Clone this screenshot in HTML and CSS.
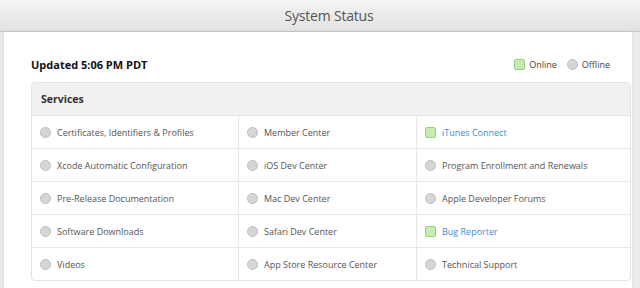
FILE: index.html
```html
<!doctype html>
<html>
<head>
  <link rel="stylesheet" href="styles.css">
</head>
<body>
  <div class="topbar"><span class="title">System Status</span></div>
  <div class="panel">
    <div class="status-head">
      <div class="updated">Updated 5:06 PM PDT</div>
      <div class="legend">
        <span class="ind online"></span><span class="legend-label">Online</span>
        <span class="ind offline"></span><span class="legend-label">Offline</span>
      </div>
    </div>
    <div class="services">
      <div class="services-head">Services</div>
      <div class="grid">
        <div class="cell"><span class="ind offline"></span>Certificates, Identifiers &amp; Profiles</div>
        <div class="cell"><span class="ind offline"></span>Member Center</div>
        <div class="cell"><span class="ind online"></span><a href="#">iTunes Connect</a></div>
        <div class="cell"><span class="ind offline"></span>Xcode Automatic Configuration</div>
        <div class="cell"><span class="ind offline"></span>iOS Dev Center</div>
        <div class="cell"><span class="ind offline"></span>Program Enrollment and Renewals</div>
        <div class="cell"><span class="ind offline"></span>Pre-Release Documentation</div>
        <div class="cell"><span class="ind offline"></span>Mac Dev Center</div>
        <div class="cell"><span class="ind offline"></span>Apple Developer Forums</div>
        <div class="cell"><span class="ind offline"></span>Software Downloads</div>
        <div class="cell"><span class="ind offline"></span>Safari Dev Center</div>
        <div class="cell"><span class="ind online"></span><a href="#">Bug Reporter</a></div>
        <div class="cell"><span class="ind offline"></span>Videos</div>
        <div class="cell"><span class="ind offline"></span>App Store Resource Center</div>
        <div class="cell"><span class="ind offline"></span>Technical Support</div>
      </div>
    </div>
  </div>
</body>
</html>
```

FILE: styles.css
```css
body {
  margin: 0;
  background: #ebebeb;
  font-family: "Open Sans", "Liberation Sans", sans-serif;
  color: #555;
  overflow: hidden;
}
.topbar {
  height: 31px;
  border-bottom: 1px solid #c9c9c9;
  background: linear-gradient(#f4f4f4, #e2e2e2);
  text-align: center;
  padding-left: 18px;
}
.title {
  display: inline-block;
  line-height: 32px;
  font-size: 14px;
  letter-spacing: -0.2px;
  color: #555;
}
.panel {
  margin-left: 4px;
  width: 628px;
  height: 256px;
  background: #fff;
  box-shadow: 0 0 4px rgba(0,0,0,0.08);
  padding-left: 27px;
  box-sizing: border-box;
}
.status-head {
  display: flex;
  align-items: center;
  justify-content: space-between;
  height: 50px;
  padding-right: 22px;
}
.updated {
  font-weight: 700;
  font-size: 11px;
  color: #111;
  margin-top: 15px;
}
.legend {
  display: flex;
  align-items: center;
  font-size: 9px;
  color: #444;
  margin-top: 15px;
}
.legend-label {
  margin-left: 4px;
  margin-right: 10px;
}
.legend-label:last-child {
  margin-right: 0;
}
.ind {
  display: inline-block;
  width: 11px;
  height: 11px;
  box-sizing: border-box;
  flex: none;
}
.offline {
  border-radius: 50%;
  background: #d6d6d6;
  border: 1px solid #bdbdbd;
}
.online {
  border-radius: 2px;
  background: #c8ebb4;
  border: 1px solid #93d277;
}
.services {
  width: 598px;
  border: 1px solid #e3e3e3;
  border-radius: 4px;
  overflow: hidden;
}
.services-head {
  height: 32px;
  line-height: 32px;
  background: #f1f1f1;
  border-bottom: 1px solid #e3e3e3;
  padding-left: 9px;
  font-weight: 700;
  font-size: 10.5px;
  color: #333;
}
.grid {
  display: grid;
  grid-template-columns: 206px 178px 1fr;
}
.cell {
  display: flex;
  align-items: center;
  height: 32px;
  border-top: 1px solid #e8e8e8;
  padding-left: 8px;
  font-size: 9px;
  color: #555;
}
.cell:nth-child(-n+3) {
  border-top: 0;
}
.cell:nth-child(3n+2), .cell:nth-child(3n) {
  border-left: 1px solid #e8e8e8;
}
.cell .ind {
  margin-right: 6px;
}
a {
  color: #3b8dd1;
  text-decoration: none;
}
```
